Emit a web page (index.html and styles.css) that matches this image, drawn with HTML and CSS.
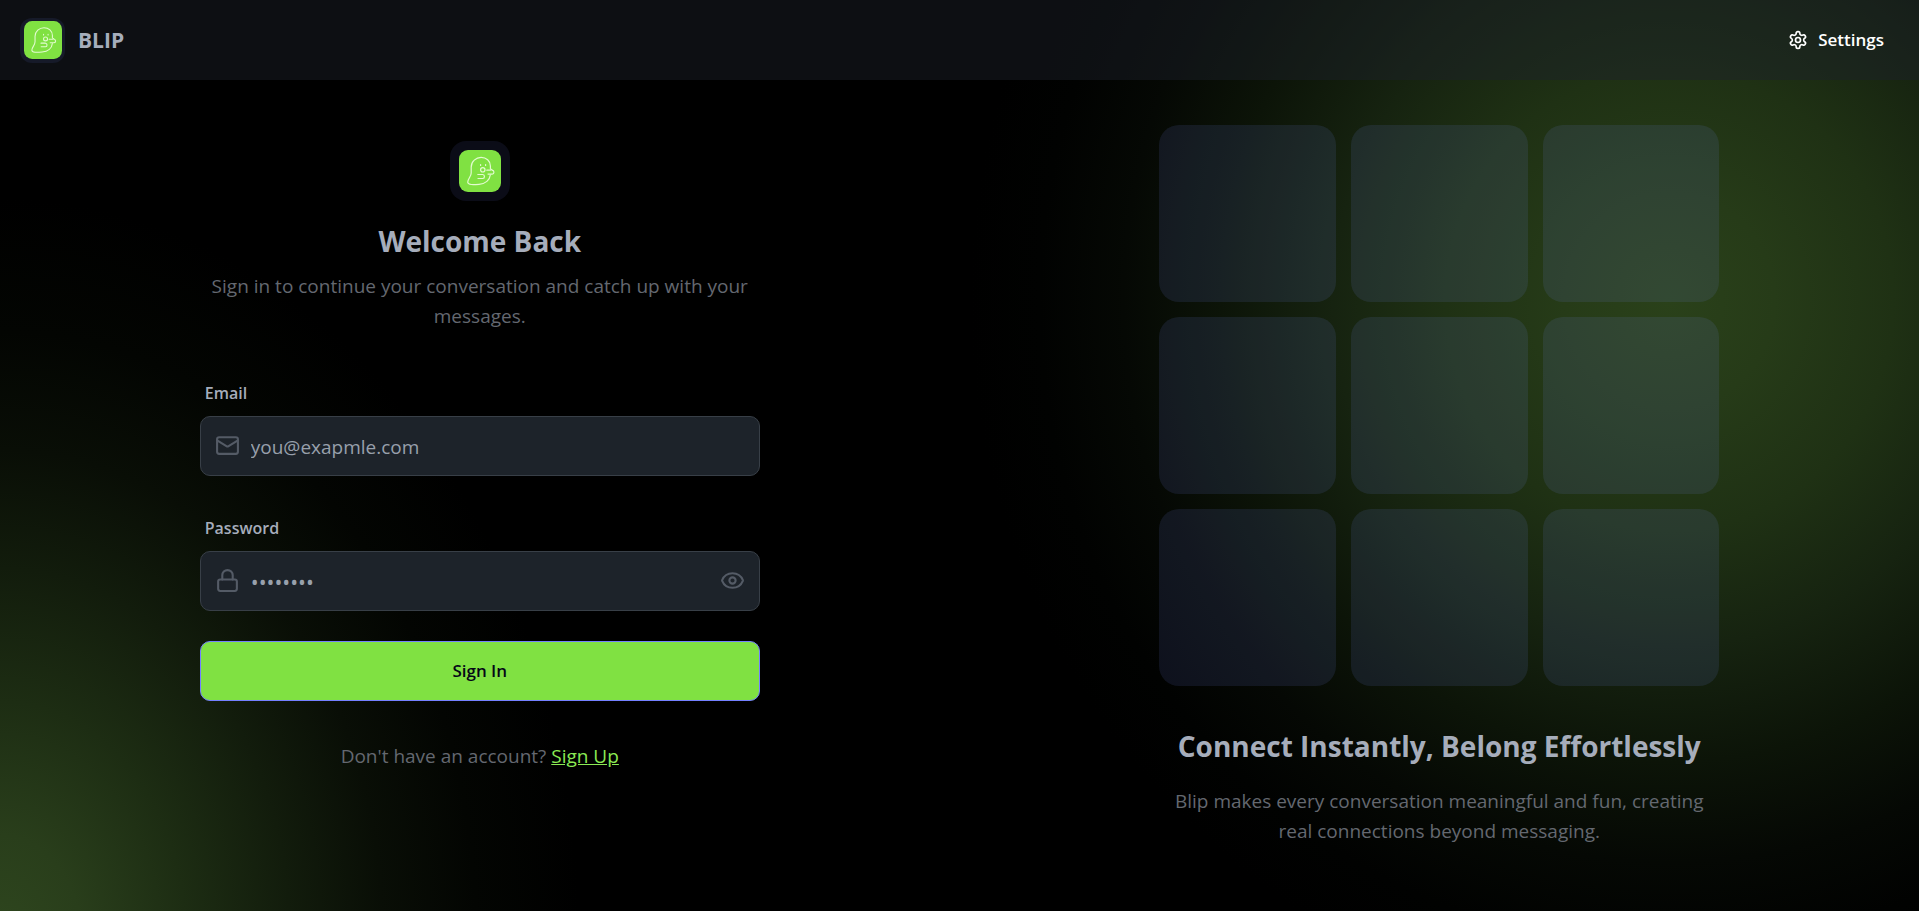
FILE: index.html
```html
<!DOCTYPE html>
<html lang="en">
<head>
<meta charset="utf-8">
<meta name="viewport" content="width=device-width, initial-scale=1">
<title>Blip</title>
<link rel="stylesheet" href="styles.css">
</head>
<body class="page">
<svg class="defs" width="0" height="0" aria-hidden="true">
  <symbol id="ghost" viewBox="0 0 42 42">
    <rect width="42" height="42" rx="9" fill="#80e142"/>
    <g fill="none" stroke="#e2fbd0" stroke-width="1.2" stroke-linecap="round" stroke-linejoin="round">
      <path d="M31.400 18.500V16c0-5.200-4.200-8.600-9.300-8.600S12.200 11.500 12.200 17v6c0 4-3.700 6-3.500 9.300.2 2.700 5.300 2.500 11.300 2 6.500-.5 10.800-4.300 11.300-9.300"/>
      <path d="M27.800 20.200h3.700c.3-1.200 1.700-1 1.700.2 2.300 0 2.300 3.600 0 3.700h-4.200"/>
      <path d="M18.800 24.500h5c2.200.2 2.200 4 0 4h-4.800"/>
      <circle cx="23.800" cy="19.800" r="2.200"/>
      <path d="M21.600 14.600v.8M26.600 14.600v.8"/>
    </g>
  </symbol>
</svg>

<header class="topbar">
  <a class="brand" href="#">
    <span class="brand-mark"><svg class="brand-ghost" aria-hidden="true"><use href="#ghost"/></svg></span>
    <span class="brand-name">BLIP</span>
  </a>
  <a class="settings" href="#settings">
    <svg class="icon-small" viewBox="0 0 24 24" aria-hidden="true"><path d="M12.220 2h-.440a2 2 0 0 0-2 2v.180a2 2 0 0 1-1 1.730l-.430.250a2 2 0 0 1-2 0l-.150-.080a2 2 0 0 0-2.730.730l-.220.380a2 2 0 0 0 .730 2.730l.150.100a2 2 0 0 1 1 1.720v.510a2 2 0 0 1-1 1.740l-.150.090a2 2 0 0 0-.730 2.730l.220.380a2 2 0 0 0 2.730.730l.150-.080a2 2 0 0 1 2 0l.430.250a2 2 0 0 1 1 1.730V20a2 2 0 0 0 2 2h.440a2 2 0 0 0 2-2v-.180a2 2 0 0 1 1-1.730l.430-.250a2 2 0 0 1 2 0l.150.080a2 2 0 0 0 2.730-.730l.220-.390a2 2 0 0 0-.730-2.730l-.150-.080a2 2 0 0 1-1-1.740v-.500a2 2 0 0 1 1-1.740l.150-.090a2 2 0 0 0 .730-2.730l-.220-.380a2 2 0 0 0-2.730-.730l-.150.080a2 2 0 0 1-2 0l-.430-.250a2 2 0 0 1-1-1.730V4a2 2 0 0 0-2-2z"/><circle cx="12" cy="12" r="3"/></svg>
    <span>Settings</span>
  </a>
</header>

<main class="split">
  <section class="pane pane-form">
    <div class="column">
      <div class="form-mark"><svg class="form-ghost" aria-hidden="true"><use href="#ghost"/></svg></div>
      <h1 class="title">Welcome Back</h1>
      <p class="lead">Sign in to continue your conversation and catch up with your messages.</p>
      <form class="form">
        <div class="field">
          <label class="label" for="email">Email</label>
          <div class="control">
            <svg class="icon icon-start" viewBox="0 0 24 24" aria-hidden="true"><rect x="2" y="4" width="20" height="16" rx="2"/><path d="m22 7-8.970 5.700a1.940 1.940 0 0 1-2.060 0L2 7"/></svg>
            <input class="input" id="email" type="email" placeholder="you@exapmle.com">
          </div>
        </div>
        <div class="field">
          <label class="label" for="password">Password</label>
          <div class="control">
            <svg class="icon icon-start" viewBox="0 0 24 24" aria-hidden="true"><rect x="3" y="11" width="18" height="11" rx="2"/><path d="M7 11V7a5 5 0 0 1 10 0v4"/></svg>
            <input class="input input-password" id="password" type="password" placeholder="••••••••">
            <button class="reveal" type="button" aria-label="Show password">
              <svg class="icon" viewBox="0 0 24 24" aria-hidden="true"><path d="M2.060 12.350a1 1 0 0 1 0-.700 10.750 10.750 0 0 1 19.880 0 1 1 0 0 1 0 .700 10.750 10.750 0 0 1-19.880 0"/><circle cx="12" cy="12" r="3"/></svg>
            </button>
          </div>
        </div>
        <button class="submit" type="submit">Sign In</button>
      </form>
      <p class="switch">Don't have an account? <a class="link" href="#signup">Sign Up</a></p>
    </div>
  </section>

  <section class="pane pane-art">
    <div class="column">
      <div class="tiles" aria-hidden="true">
        <div class="tile"></div><div class="tile"></div><div class="tile"></div>
        <div class="tile"></div><div class="tile"></div><div class="tile"></div>
        <div class="tile"></div><div class="tile"></div><div class="tile"></div>
      </div>
      <h2 class="title title-art">Connect Instantly, Belong Effortlessly</h2>
      <p class="lead">Blip makes every conversation meaningful and fun, creating real connections beyond messaging.</p>
    </div>
  </section>
</main>
</body>
</html>
```

FILE: styles.css
```css
* { box-sizing: border-box; }

.page {
  margin: 0;
  min-height: 100vh;
  display: flex;
  flex-direction: column;
  color: #a6adbb;
  font: 19px/30px "Open Sans", "Noto Sans", sans-serif;
  background:
    radial-gradient(700px 720px at 87% 33%, #2a411a 0%, #263b18 15%, #1f3114 32%, #162310 48%, #0c1408 64%, #050804 78%, #010201 90%, transparent 100%),
    radial-gradient(580px 740px at 0% 103%, #2e461e 0%, #293e1b 14%, #1d2d13 32%, #121c0c 50%, #090e06 66%, #030502 82%, transparent 100%),
    #000;
}

.defs { position: absolute; }

.topbar {
  height: 80px;
  padding: 0 20px;
  display: flex;
  align-items: center;
  justify-content: space-between;
  background: rgba(28, 33, 42, 0.45);
}

.brand {
  display: flex;
  align-items: center;
  gap: 13px;
  color: #a6adbb;
  text-decoration: none;
}

.brand-mark {
  width: 45px;
  height: 45px;
  display: grid;
  place-items: center;
  border-radius: 12px;
  background: #161a29;
}

.brand-ghost { width: 38px; height: 38px; }

.brand-name { font-size: 21px; font-weight: 700; }

.settings {
  padding: 0 15px;
  display: flex;
  align-items: center;
  gap: 10px;
  color: #fff;
  font-size: 17px;
  font-weight: 600;
  text-decoration: none;
}

.icon,
.icon-small {
  display: block;
  fill: none;
  stroke: currentColor;
  stroke-width: 2;
  stroke-linecap: round;
  stroke-linejoin: round;
}

.icon { width: 25px; height: 25px; }
.icon-small { width: 20px; height: 20px; }

.split {
  flex: 1;
  display: grid;
  grid-template-columns: 1fr 1fr;
}

.pane {
  display: flex;
  align-items: center;
  justify-content: center;
}

.pane-form { padding-bottom: 80px; }
.pane-art { padding-bottom: 20px; }

.column {
  width: 100%;
  max-width: 560px;
  text-align: center;
}

.form-mark {
  width: 60px;
  height: 60px;
  margin: 0 auto 20px;
  display: grid;
  place-items: center;
  border-radius: 16px;
  background: #0b0c17;
}

.form-ghost { width: 42px; height: 42px; }

.title {
  margin: 0 0 10px;
  font-size: 28px;
  line-height: 40px;
  font-weight: 700;
}

.title-art { margin: 40px 0 20px; }

.lead,
.switch {
  margin: 0;
  color: #646870;
}

.form {
  margin: 50px 0 40px;
  text-align: left;
}

.field { margin-bottom: 40px; }
.field:nth-of-type(2) { margin-bottom: 30px; }

.label {
  display: block;
  margin-bottom: 10px;
  padding-left: 5px;
  font-size: 16px;
  line-height: 25px;
  font-weight: 600;
}

.control { position: relative; }

.input {
  display: block;
  width: 100%;
  height: 60px;
  padding: 2px 50px 0;
  border: 1px solid #383f47;
  border-radius: 10px;
  background: #1d232a;
  color: #a6adbb;
  font: inherit;
}

.input-password { font-size: 21px; }

.input::placeholder { color: #98a0ac; opacity: 1; }

.icon-start,
.reveal {
  position: absolute;
  top: 0;
  bottom: 0;
  margin: auto 0;
  color: #545b66;
}

.icon-start { left: 15px; }

.reveal {
  right: 15px;
  height: 25px;
  padding: 0;
  border: 0;
  background: none;
}

.submit {
  width: 100%;
  height: 60px;
  border: 1px solid #7480ff;
  border-radius: 10px;
  background: #80e142;
  color: #050617;
  font: inherit;
  font-size: 17px;
  font-weight: 600;
}

.link { color: #8bea54; }

.tiles {
  display: grid;
  grid-template-columns: repeat(3, 1fr);
  gap: 15px;
}

.tile {
  aspect-ratio: 1;
  border-radius: 20px;
  background: rgba(116, 128, 235, 0.12);
}
```
